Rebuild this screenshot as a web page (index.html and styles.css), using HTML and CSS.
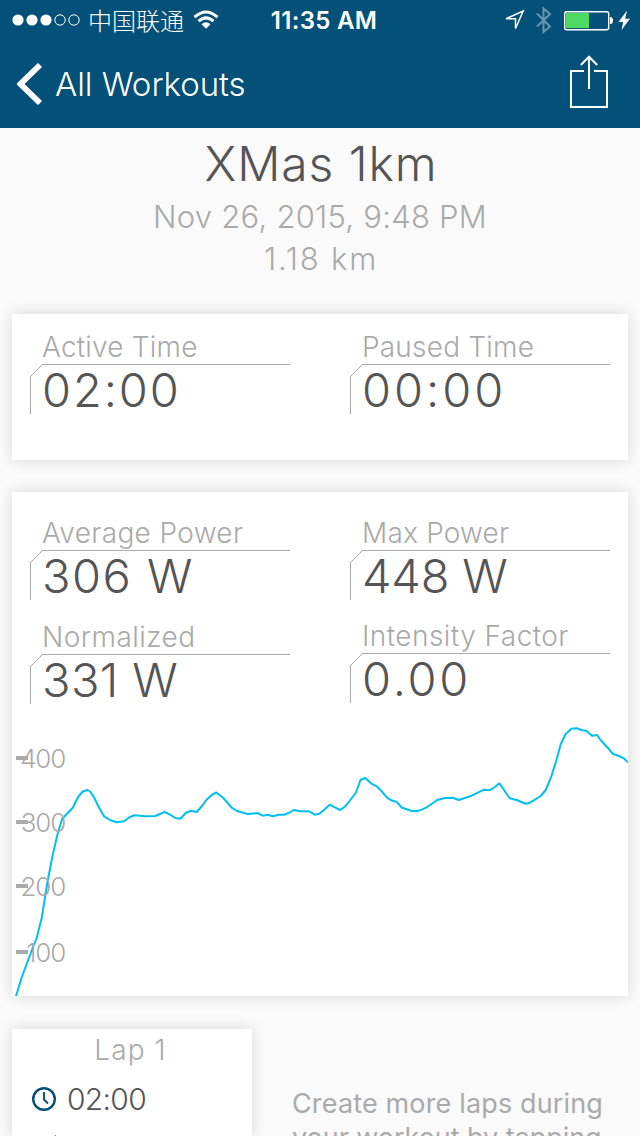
FILE: index.html
```html
<!DOCTYPE html>
<html lang="en">
<head>
<meta charset="utf-8">
<title>XMas 1km</title>
<link rel="stylesheet" href="styles.css">
</head>
<body>
<header class="header">
  <div class="status">
    <div class="status-left">
      <svg width="68" height="12" viewBox="0 0 68 12"><g fill="#fff"><circle cx="6" cy="6" r="5.6"/><circle cx="20" cy="6" r="5.6"/><circle cx="34" cy="6" r="5.6"/></g><g fill="none" stroke="#fff"><circle cx="48" cy="6" r="5.2"/><circle cx="62" cy="6" r="5.2"/></g></svg>
      <span class="carrier">中国联通</span>
      <svg class="wifi" width="26" height="20" viewBox="0 0 26 20"><g fill="none" stroke="#fff" stroke-width="3"><path d="M1.500 7.200Q13-3.200 24.500 7.200"/><path d="M5.500 11.200Q13 4.500 20.500 11.200"/></g><path d="M8.500 14.200Q13 10.500 17.500 14.200L13 18.700Z" fill="#fff"/></svg>
    </div>
    <span class="clock">11:35 AM</span>
    <svg class="status-right" width="136" height="32" viewBox="504 4 136 32">
      <path d="M506 22.200L523.200 14.500L515.500 32V22.200Z" transform="translate(0 -3.500)" fill="none" stroke="#fff" stroke-width="1.500"/>
      <path d="M537 14L550 27L543.500 32.500V9L550 14.500L537 27" transform="translate(0 -.5)" fill="none" stroke="#6896b0" stroke-width="2"/>
      <rect x="564.700" y="11.700" width="44" height="18" rx="2" fill="none" stroke="#fff" stroke-width="1.400"/>
      <rect x="566" y="13" width="23" height="15" fill="#4cd964"/>
      <path d="M610 17Q613 17 613 20.500Q613 24 610 24Z" fill="#fff"/>
      <path d="M627 10.500L618.500 22H623.200L621.500 30L630 18.800H625.200Z" fill="#fff"/>
    </svg>
  </div>
  <nav class="nav">
    <div class="back">
      <svg width="26" height="42" viewBox="0 0 26 42"><path d="M23 2L3.500 21L23 40" fill="none" stroke="#fff" stroke-width="5.800"/></svg>
      <span class="back-label">All Workouts</span>
    </div>
    <svg class="share" width="38" height="54" viewBox="0 0 38 54" fill="none" stroke="#fff" stroke-width="2"><path d="M14 16H1V52H37V16H24M19 34V2M10.800 10L19 1.700L27.200 10"/></svg>
  </nav>
</header>
<main class="content">
  <section class="summary">
    <h1 class="title">XMas 1km</h1>
    <div class="date">Nov 26, 2015, 9:48 PM</div>
    <div class="distance">1.18 km</div>
  </section>

  <section class="card times">
    <div class="column">
      <div class="stat"><div class="label active">Active Time</div><div class="value time">02:00</div></div>
    </div>
    <div class="column">
      <div class="stat"><div class="label paused">Paused Time</div><div class="value zero">00:00</div></div>
    </div>
  </section>

  <section class="card power">
    <div class="columns">
      <div class="column">
        <div class="stat"><div class="label average">Average Power</div><div class="value avg">306 W</div></div>
        <div class="stat"><div class="label normalized">Normalized</div><div class="value norm">331 W</div></div>
      </div>
      <div class="column right">
        <div class="stat"><div class="label max">Max Power</div><div class="value peak">448 W</div></div>
        <div class="stat"><div class="label intensity">Intensity Factor</div><div class="value factor">0.00</div></div>
      </div>
    </div>
    <svg class="chart" width="616" height="292" viewBox="12 704 616 292">
      <path class="trace" d="M16 996L21.500 978L30 955L36.700 938L41.700 918L47.300 883L52.300 857L57.300 835L62 819L67.700 813L73 807.500L75.500 802L78.500 796.500L82.700 791.500L87.500 790L90 791.500L93.700 796.700L98.700 807L104 816.300L110 820L116.700 822.300L124 821.300L129.300 817.300L134.700 815.300L145 816.300L155.300 816L164.700 812L170 814.700L175.300 818L180.300 818.700L186 812.700L191 810.700L196.700 812L202 806L206.300 800L211.700 795L216.300 792.500L223.300 798L231.700 807.700L237 811L247.700 814L257.300 813L262.700 815.700L267.700 814.700L273 816.300L278.300 814.700L284 814.700L288.700 813L293.700 810L300 811.300L309.300 811.300L314.700 814.700L319.300 813.700L324.700 809.300L329.700 804.700L335 807.300L340 810L345 806.700L350.300 800L355.700 793L358.300 786L360.700 779.700L365.300 778L371 783.300L376.700 786.300L381.700 791.300L387 797.700L391.300 800.300L396.700 802L402 807.700L412 811L417.300 811L420 810.300L426.700 807.300L437.300 800L445 798L452.700 797.700L458.700 800L471.700 795.700L484 789.700L489.300 790.300L495 787L499.300 783.300L509.700 798.300L517.300 800.300L525.700 803.700L530 802.700L540.700 796L545.700 790L551 777.300L556 761.700L560.700 744.300L565.700 734L571.300 728.700L576.700 728.300L582.300 730.300L586.300 730.700L592 735.700L597 735L601.700 741.300L607.700 747.700L613 754L619 756L623.700 758.300L628 762.300"/>
      <path d="M16 758H28M16 822H28M16 886H28M16 952H28" stroke="#aaa" stroke-width="4"/>
      <g class="axis"><text x="65" y="768">400</text><text x="65" y="832">300</text><text x="65" y="896">200</text><text x="65" y="962">100</text></g>
    </svg>
  </section>

  <section class="laps">
    <article class="card lap">
      <div class="lap-title">Lap 1</div>
      <div class="lap-row">
        <svg width="24" height="24" viewBox="0 0 24 24" fill="none" stroke="#034f7a"><circle cx="12" cy="12" r="10.800" stroke-width="2.400"/><path d="M12 5V12.500L16 16.500" stroke-width="1.900"/></svg>
        <span class="lap-time">02:00</span>
      </div>
      <svg class="lap-power" width="24" height="1" viewBox="0 0 24 1"><path d="M24 0L22.500 1H24Z" fill="#034f7a"/></svg>
    </article>
    <p class="hint"><span class="hint-first">Create more laps during</span><br><span class="hint-second">your workout by tapping</span></p>
  </section>
</main>
</body>
</html>
```
FILE: styles.css
```css
* { box-sizing: border-box; }
body { margin: 0; width: 640px; height: 1136px; overflow: hidden; background: #fafafa; color: #555; font-family: Inter, "Noto Sans CJK SC", sans-serif; }
svg { display: block; flex: none; }
.header { height: 128px; background: #035079; color: #fff; }
.status { height: 40px; display: grid; grid-template-columns: 260px 128px 1fr; align-items: center; }
.status-left { display: flex; align-items: center; padding-left: 12px; }
.carrier { margin-left: 8px; font: 300 24px/40px "Noto Sans CJK SC", sans-serif; white-space: nowrap; }
.wifi { margin-left: 9px; }
.clock { padding-top: 1px; text-align: center; font-size: 24px; font-weight: 600; letter-spacing: .3px; white-space: nowrap; }
.status-right { justify-self: end; }
.nav { height: 88px; display: flex; justify-content: space-between; padding: 0 32px 0 17px; }
.back { height: 88px; display: flex; align-items: center; gap: 12px; }
.back-label { font-size: 33px; font-weight: 350; white-space: nowrap; letter-spacing: -.05px; }
.share { margin-top: 15px; }
.summary { height: 186px; padding-top: 8px; text-align: center; white-space: nowrap; }
.title { margin: 0; padding-left: 2px; font-size: 48px; line-height: 56px; font-weight: 350; letter-spacing: .9px; }
.date { padding-top: 5px; font-size: 31px; line-height: 40px; font-weight: 300; letter-spacing: .25px; color: #aaa; }
.distance { padding: 2px 0 0 2px; font-size: 31px; line-height: 40px; font-weight: 300; letter-spacing: 1.8px; color: #aaa; }
.card { background: #fff; box-shadow: 0 0 14px rgba(0, 0, 0, .14); }
.times { height: 146px; margin: 0 12px; padding: 18px 0 0 18px; display: flex; gap: 60px; }
.power { height: 504px; margin: 32px 12px 0; padding-top: 26px; }
.columns { height: 186px; display: flex; gap: 60px; padding-left: 18px; }
.column { width: 260px; display: flex; flex-direction: column; gap: 22px; }
.right { gap: 21px; }
.stat { height: 82px; }
.label { height: 32px; padding-left: 12px; line-height: 30px; font-size: 28px; font-weight: 300; letter-spacing: .2px; color: #aaa; white-space: nowrap; }
.average { letter-spacing: .35px; }
.normalized, .intensity { letter-spacing: .45px; }
.value { height: 50px; padding: 2px 0 0 12px; line-height: 48px; font-size: 47px; font-weight: 350; white-space: nowrap; background: linear-gradient(#aaa, #aaa) 12px 0 / 248px 1px no-repeat, linear-gradient(#aaa, #aaa) 0 13px / 1px 37px no-repeat, linear-gradient(to bottom right, transparent 48%, #aaa 48%, #aaa 52%, transparent 52%) 0 0 / 13px 13px no-repeat; }
.time { letter-spacing: 1.9px; }
.zero { letter-spacing: 3px; }
.avg { letter-spacing: 1.5px; }
.norm { letter-spacing: .4px; }
.peak { letter-spacing: -.2px; }
.factor { letter-spacing: 2.8px; }
.trace { fill: none; stroke: #00bff3; stroke-width: 2; stroke-linejoin: round; }
.axis { fill: #aaa; font-size: 26px; font-weight: 300; letter-spacing: -1.2px; text-anchor: end; }
.laps { display: flex; margin: 33px 12px 0; }
.lap { width: 240px; height: 107px; }
.lap-title { height: 42px; line-height: 42px; padding-right: 3px; text-align: center; font-size: 28px; font-weight: 300; letter-spacing: 1.1px; color: #aaa; }
.lap-row { height: 56px; padding-left: 20px; display: flex; align-items: center; gap: 11px; font-size: 30px; font-weight: 350; letter-spacing: -.7px; }
.lap-power { margin: 8px 0 0 20px; }
.hint { height: 49px; overflow: hidden; margin: 58px 0 0 40px; font-size: 27px; line-height: 34px; color: #aaa; white-space: nowrap; }
.hint-first { letter-spacing: .15px; }
.hint-second { letter-spacing: -.05px; }
```
